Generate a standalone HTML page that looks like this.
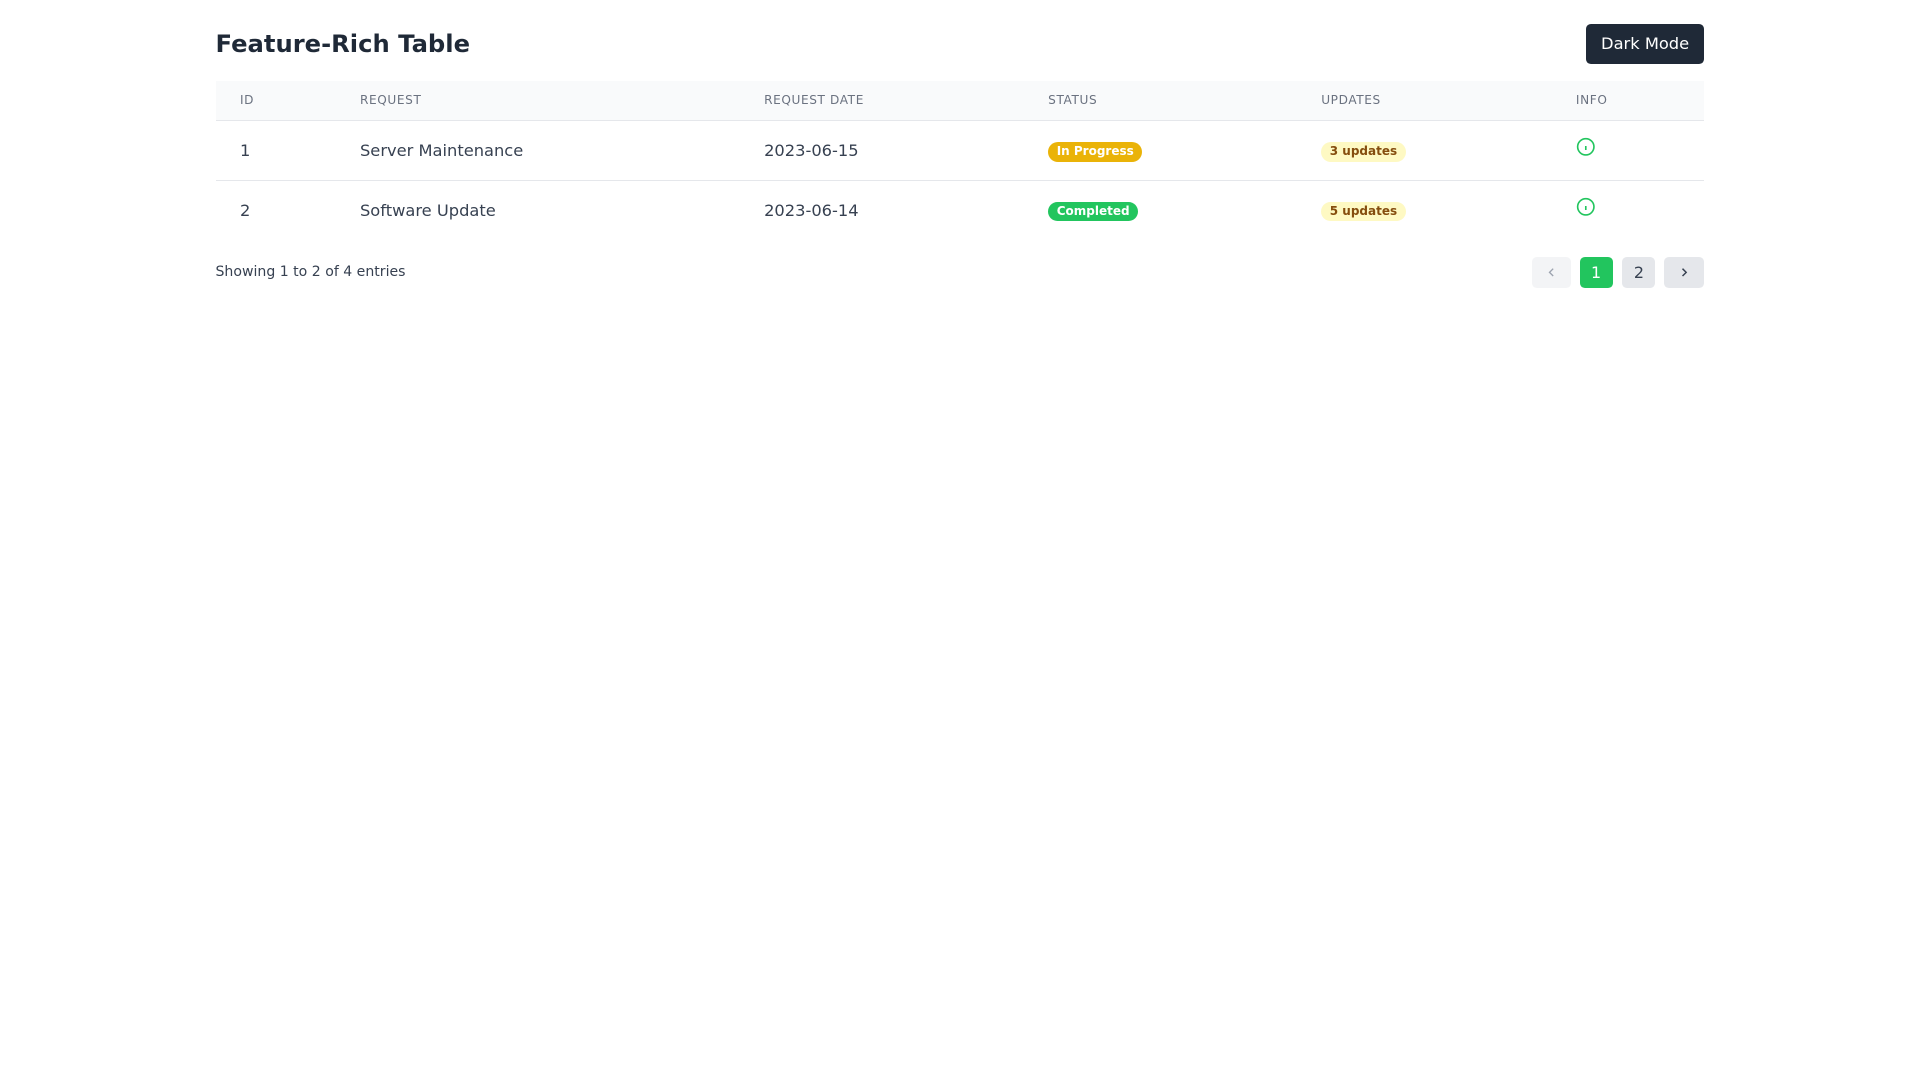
<!DOCTYPE html>
<html><head><meta charset="utf-8"><style>
html{zoom:1.2245}
body{margin:0;background:#fff;font-family:"DejaVu Sans","Liberation Sans",sans-serif;color:#1f2937}
.wrap{width:1216px;margin:0 auto;position:relative}
.hd{height:66px;position:relative}
h1{position:absolute;left:0;top:22px;margin:0;font-size:19.8px;font-weight:bold;line-height:28px;color:#1f2937}
.btn{position:absolute;right:0;top:20px;width:97px;height:32px;background:#1f2937;color:#fff;border-radius:4px;font-size:13.3px;line-height:32px;text-align:center}
table{width:1216px;border-collapse:collapse;table-layout:fixed}
th{background:#f9fafb;height:32px;font-size:9.9px;font-weight:normal;color:#6b7280;text-align:left;letter-spacing:.5px;border-bottom:1px solid #e5e7eb;padding:0}
td{height:48px;font-size:13.3px;color:#374151;padding:0;border-bottom:1px solid #e5e7eb}
tr:last-child td{border-bottom:none}
th:first-child,td:first-child{padding-left:20px}
.b{display:inline-block;height:16px;line-height:16px;padding:0 7px;border-radius:9px;font-size:9.8px;font-weight:bold;vertical-align:middle;position:relative;top:1px}
.ft{position:relative;height:52px}
.sh{position:absolute;left:0;top:20px;font-size:11.5px;color:#374151}
.pg{position:absolute;top:14px;height:26px;border-radius:4px;font-size:13px;line-height:26px;text-align:center}
.pg svg{vertical-align:middle;position:relative;top:-1px}
</style></head><body><div class="wrap">
<div class="hd"><h1>Feature-Rich Table</h1><div class="btn">Dark Mode</div></div>
<table><colgroup><col style="width:118px"><col style="width:330px"><col style="width:232px"><col style="width:223px"><col style="width:208px"><col></colgroup>
<tr><th>ID</th><th>REQUEST</th><th>REQUEST DATE</th><th>STATUS</th><th>UPDATES</th><th>INFO</th></tr>
<tr><td>1</td><td>Server Maintenance</td><td>2023-06-15</td><td><span class="b" style="background:#eab308;color:#fff">In Progress</span></td><td><span class="b" style="background:#fef9c3;color:#854d0e">3 updates</span></td><td><svg width="16" height="16" viewBox="0 0 24 24" fill="none" stroke="#22c55e" stroke-width="2" style="vertical-align:middle;position:relative;top:-3px"><circle cx="12" cy="12" r="10"/><path d="M12 16v-5M12 8h.01"/></svg></td></tr>
<tr><td>2</td><td>Software Update</td><td>2023-06-14</td><td><span class="b" style="background:#22c55e;color:#fff">Completed</span></td><td><span class="b" style="background:#fef9c3;color:#854d0e">5 updates</span></td><td><svg width="16" height="16" viewBox="0 0 24 24" fill="none" stroke="#22c55e" stroke-width="2" style="vertical-align:middle;position:relative;top:-3px"><circle cx="12" cy="12" r="10"/><path d="M12 16v-5M12 8h.01"/></svg></td></tr>
</table>
<div class="ft"><div class="sh">Showing 1 to 2 of 4 entries</div>
<div class="pg" style="left:1075px;width:32px;background:#f3f4f6"><svg width="12" height="12" viewBox="0 0 24 24" fill="none" stroke="#9ca3af" stroke-width="2.2"><path d="M15 18l-6-6 6-6"/></svg></div>
<div class="pg" style="left:1114px;width:27px;background:#22c55e;color:#fff">1</div>
<div class="pg" style="left:1149px;width:27px;background:#e5e7eb;color:#374151">2</div>
<div class="pg" style="left:1183px;width:33px;background:#e5e7eb"><svg width="12" height="12" viewBox="0 0 24 24" fill="none" stroke="#374151" stroke-width="2.4"><path d="M9 18l6-6-6-6"/></svg></div>
</div></div></body></html>
